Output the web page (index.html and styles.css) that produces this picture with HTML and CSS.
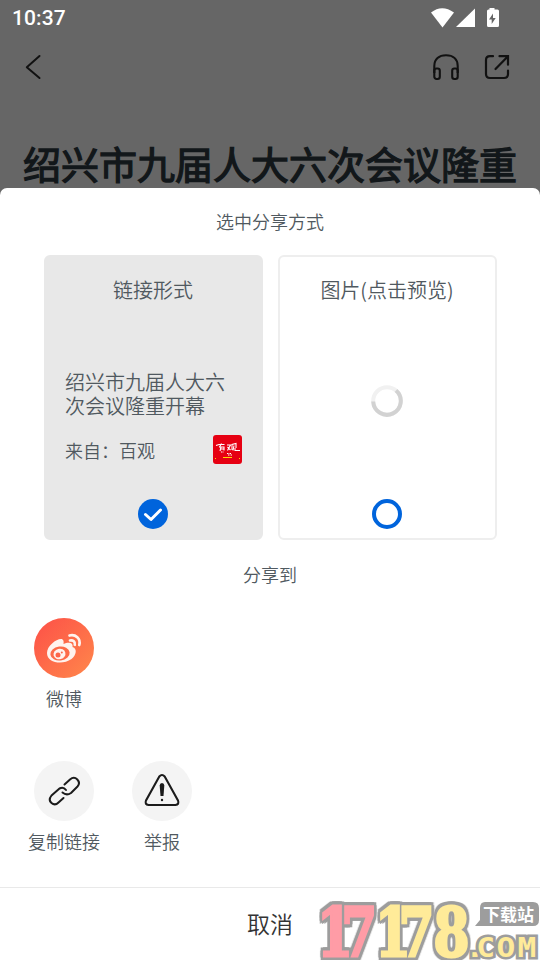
FILE: index.html
```
<!DOCTYPE html>
<html lang="zh-CN">
<head>
<meta charset="utf-8">
<title>分享</title>
<link rel="stylesheet" href="styles.css">
</head>
<body>
<div class="screen">
  <header class="backdrop">
    <div class="status">
      <span class="time">10:37</span>
      <svg class="status-icons" width="68" height="20" viewBox="0 0 68 20" fill="#fff">
        <path d="M0 4.5Q11-4 23 4.5L11.5 19.5z"/>
        <path d="M44 .5V19H25z"/>
        <path fill-rule="evenodd" d="M58.500 0h5v1.500h3q1.500 0 1.500 1.500v14.500q0 1.500-1.500 1.500h-9q-1.500 0-1.500-1.500V3q0-1.500 1.500-1.500h1zM62 5.500l-4 6h2.700v4.500l4-6H62z"/>
      </svg>
    </div>
    <div class="toolbar">
      <svg width="18" height="26" viewBox="0 0 18 26" fill="none" stroke="#111" stroke-width="2" stroke-linecap="round" stroke-linejoin="round"><path d="M14.500 2L1.800 13.200 14.500 24"/></svg>
      <div class="tools">
        <svg width="28" height="28" viewBox="0 0 28 28" fill="none" stroke="#111" stroke-width="2.100"><path d="M2.300 20v-7C2.300 6 7 2.300 14 2.300S25.700 6 25.700 13v7"/><rect x="2.300" y="15.500" width="5.500" height="10.500" rx="2.200"/><rect x="20.200" y="15.500" width="5.500" height="10.500" rx="2.200"/></svg>
        <svg width="26" height="26" viewBox="0 0 26 26" fill="none" stroke="#111" stroke-width="2.200"><path d="M9 2.200H6Q2 2.200 2 6v14q0 4 4 4h14q4 0 4-4v-3.500M15.500 2.200H24v8.500M23.500 2.700L11.500 15" stroke-linecap="round"/></svg>
      </div>
    </div>
    <h1 class="headline">绍兴市九届人大六次会议隆重</h1>
  </header>
  <main class="sheet">
    <h2 class="section">选中分享方式</h2>
    <div class="cards">
      <section class="card selected">
        <div class="card-title">链接形式</div>
        <div class="article">绍兴市九届人大六次会议隆重开幕</div>
        <div class="source"><span>来自：百观</span>
          <svg width="29" height="29" viewBox="0 0 29 29">
            <rect width="29" height="29" rx="3" fill="#e60012"/>
            <g fill="none" stroke="#fff" stroke-width="1.100"><path d="M3 10.500l3-1h5.500M8.500 8.500l-2 3.500M6 12h5v3.500M8 12l-1 4M8 14h3M14 10h3.500l-3 5.500M14.500 12l3 3M19 15V9.500l4-1v4.500M21 10.500l-1 5M22 13v2.500h5"/><path d="M8 17h3m3 1.500h5m-4 1.500h4" stroke-dasharray="1.500 1"/></g>
            <path d="M10 22.500h9M2 23.500h1M26 23.500h1" stroke="#ffd800"/>
          </svg>
        </div>
        <svg class="choice" width="30" height="30" viewBox="0 0 30 30"><circle cx="15" cy="15" r="15" fill="#0064dc"/><path d="M7.500 15.500l5.500 5L22.500 11" fill="none" stroke="#fff" stroke-width="3" stroke-linecap="round" stroke-linejoin="round"/></svg>
      </section>
      <section class="card">
        <div class="card-title">图片(点击预览)</div>
        <svg class="loader" width="32" height="32" viewBox="0 0 32 32" fill="none" stroke-width="4"><circle cx="16" cy="16" r="13.800" stroke="#f1f1f1"/><path d="M25 5.500A13.800 13.800 0 1 1 2.200 16.500" stroke="#d2d2d2"/></svg>
        <svg class="choice" width="30" height="30" viewBox="0 0 30 30"><circle cx="15" cy="15" r="13" fill="none" stroke="#0064dc" stroke-width="4"/></svg>
      </section>
    </div>
    <h2 class="section target">分享到</h2>
    <div class="actions">
      <div class="action">
        <svg width="60" height="60" viewBox="0 0 60 60">
          <defs><linearGradient id="warm" x1="0" y1="0" x2="1" y2="1"><stop offset="0.100" stop-color="#fd5548"/><stop offset="1" stop-color="#ff884b"/></linearGradient></defs>
          <circle cx="30" cy="30" r="30" fill="url(#warm)"/>
          <path fill="#fff3ee" d="M13 35c0-7 9-14 14-14 2.500 0 3 2.500 2.500 5 5-2.500 10-1.500 9 3 5 1.500 4 8-1 12-9 6.500-24.500 4-24.500-6z"/>
          <ellipse cx="26" cy="35.500" rx="9.700" ry="7" fill="#fd6b48" transform="rotate(-8 26 35.500)"/>
          <ellipse cx="25.500" cy="36" rx="6" ry="5.300" fill="#fff3ee" transform="rotate(-15 25.500 36)"/>
          <circle cx="24" cy="37" r="2.500" fill="#fd6548"/><circle cx="27.800" cy="34.500" r="1" fill="#fd6548"/>
          <path d="M35.500 17.500c6-1.500 11.500 3 9.800 9.500M36 22.500c3-.7 5.500 1.500 4.800 4.300" fill="none" stroke="#fff3ee" stroke-width="2.700" stroke-linecap="round"/>
        </svg>
        <span>微博</span>
      </div>
    </div>
    <div class="actions tools-row">
      <div class="action">
        <svg width="60" height="60" viewBox="0 0 60 60"><circle cx="30" cy="30" r="30" fill="#f4f4f4"/><g fill="none" stroke="#1b1b1b" stroke-width="2" stroke-linecap="round" stroke-linejoin="round"><path d="M30.500 23.500L36 18.500Q40 15 43.300 18.500T43.500 25.500L37 32Q32.500 35 28.500 31.500"/><path d="M32 29Q29.500 25.500 25.500 27.500L17.500 34.500Q14 39 17.500 42T24.500 41.500L29.500 37"/></g></svg>
        <span>复制链接</span>
      </div>
      <div class="action">
        <svg width="60" height="60" viewBox="0 0 60 60"><circle cx="30" cy="30" r="30" fill="#f4f4f4"/><path d="M27.300 15.500Q30 12.500 32.700 15.500L46 39.500Q47.500 43.500 43.500 44h-27Q12.500 43.500 14 39.500z" fill="none" stroke="#1b1b1b" stroke-width="2.100" stroke-linejoin="round"/><path d="M27.700 24.500Q27.700 22 30 22t2.300 2.500L31.500 35h-3z" fill="#1b1b1b"/><circle cx="30" cy="39" r="1.200" fill="#1b1b1b"/></svg>
        <span>举报</span>
      </div>
    </div>
    <footer class="cancel">取消</footer>
  </main>
  <svg class="watermark" width="224" height="60" viewBox="0 0 224 60">
    <g class="digits"><text class="pink" transform="translate(1 55.500) scale(.76 1)" x="0 32">17</text><text class="yellow" transform="translate(59 55.500) scale(.76 1)" x="0 31 77">178</text></g>
    <path d="M169 2h48q6 0 6 6v12q0 6-6 6h-58l5-6V8q0-6 5-6z" fill="#9d9d9d"/>
    <text class="station" x="167" y="21" textLength="51" lengthAdjust="spacingAndGlyphs">下载站</text>
    <text class="domain" transform="translate(0 56.500) scale(1.200 1)" x="124.500 133.500 150.500 168">.COM</text>
  </svg>
</div>
</body>
</html>
```
FILE: styles.css
```
* { box-sizing: border-box; }
body { margin: 0; background: #fff; color: #505960; font-family: Roboto, "Noto Sans CJK SC", sans-serif; }
svg { display: block; flex: none; }
h1, h2 { margin: 0; }
.screen { position: relative; width: 540px; height: 960px; overflow: hidden; background: #666; display: flex; flex-direction: column; }
.backdrop { height: 188px; flex: none; }
.status { height: 36px; padding: 0 41px 0 12px; display: flex; justify-content: space-between; align-items: center; }
.time { color: #fff; font-size: 21px; font-weight: 500; line-height: 38px; letter-spacing: .1px; }
.status-icons { margin-bottom: 1px; }
.toolbar { height: 62px; padding: 0 30px 0 25px; display: flex; align-items: center; justify-content: space-between; }
.tools { display: flex; align-items: center; gap: 24px; }
.headline { padding: 38px 0 0 23px; color: #12171a; font: 400 38px/54px "Noto Sans CJK SC", sans-serif; -webkit-text-stroke: 1.3px #12171a; white-space: nowrap; }
.sheet { flex: 1; background: #fff; border-radius: 7px 7px 0 0; display: flex; flex-direction: column; font-family: "Noto Sans CJK SC", sans-serif; font-weight: 350; }
.section { height: 67px; flex: none; text-align: center; font-size: 18px; font-weight: 350; line-height: 67px; }
.cards { display: flex; gap: 15px; padding: 0 43px 0 44px; }
.card { width: 219px; height: 285px; padding: 21px 20px 9px 19px; border: 2px solid #eee; border-radius: 6px; display: flex; flex-direction: column; background: #fff; }
.card.selected { background: #e8e8e8; border-color: #e8e8e8; }
.card-title { text-align: center; font-size: 20px; line-height: 24px; }
.article { margin-top: 68px; font-size: 20px; line-height: 24px; width: 164px; }
.source { height: 29px; margin: 17px -1px 0 0; display: flex; align-items: center; justify-content: space-between; font-size: 18px; line-height: 29px; }
.source span { padding-top: 2px; }
.choice { margin: auto 73px 0; }
.loader { margin: 83px 72px 0; }
.target { height: 78px; line-height: 68px; }
.actions { display: flex; flex: none; gap: 26px; padding: 0 28px; height: 143px; }
.tools-row { height: 126px; }
.action { width: 72px; display: flex; flex-direction: column; align-items: center; gap: 6px; font-size: 18px; line-height: 29px; white-space: nowrap; }
.cancel { flex: none; height: 73px; border-top: 1px solid #e9e9e9; text-align: center; color: #333; font-size: 23px; line-height: 71px; }
.watermark { position: absolute; left: 316px; top: 900px; }
.digits { font: 700 68px "DejaVu Serif", serif; }
.pink, .yellow { stroke-width: 3px; stroke-linejoin: miter; filter: drop-shadow(3px 0 0 #9d9d9d) drop-shadow(-3px 0 0 #9d9d9d) drop-shadow(0 3px 0 #9d9d9d) drop-shadow(0 -3px 0 #9d9d9d); }
.pink { fill: #ff9ca6; stroke: #ff9ca6; }
.yellow { fill: #ffeb99; stroke: #ffeb99; }
.domain { fill: #ffeb99; stroke: #9d9d9d; stroke-width: 5px; paint-order: stroke; font: 700 26px "DejaVu Sans Mono", monospace; }
.station { fill: #fff; font: 700 17px "Noto Sans CJK SC", sans-serif; }
```
